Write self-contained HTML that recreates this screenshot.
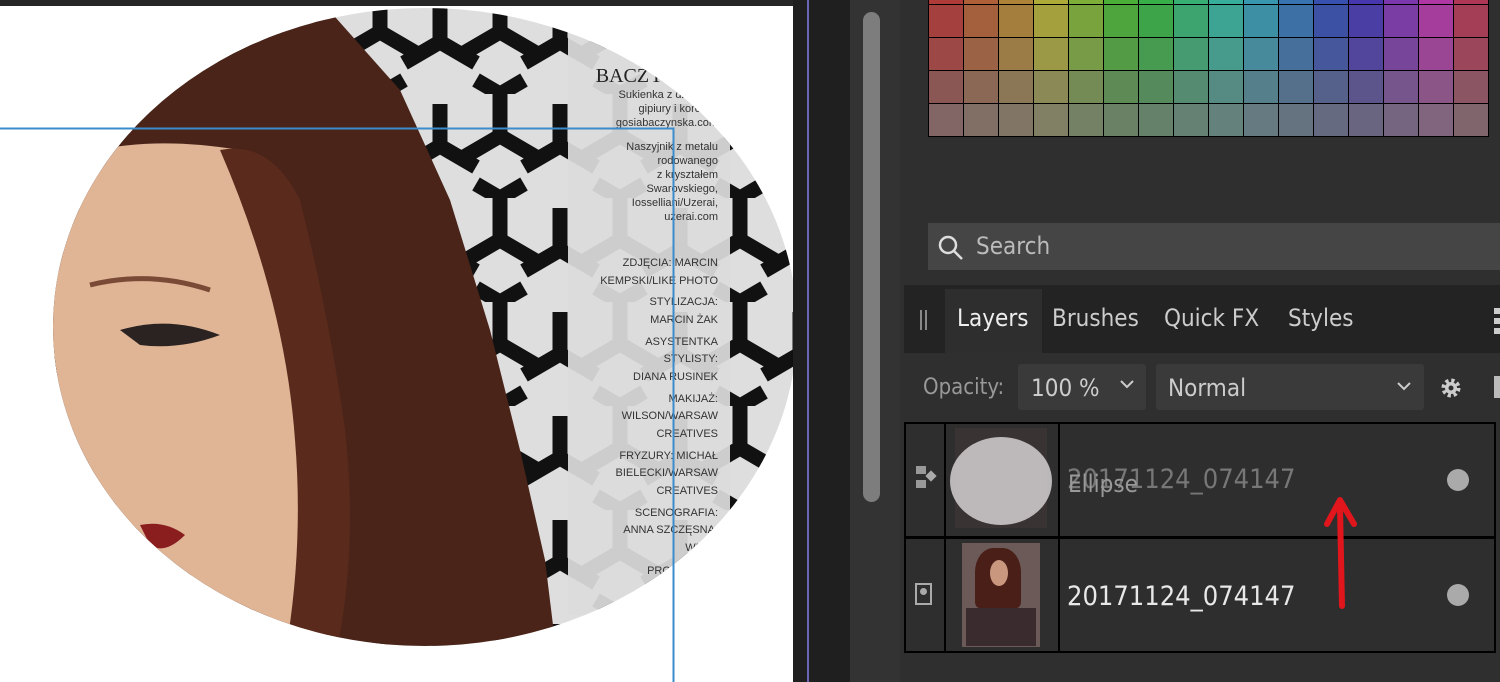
<!DOCTYPE html>
<html><head><meta charset="utf-8"><style>
body{margin:0;width:1500px;height:682px;overflow:hidden;background:#2f2f2f;font-family:"Liberation Sans",sans-serif;position:relative}
.a{position:absolute}
.t{color:#d8d8d8;font-size:24px;font-family:"DejaVu Sans Condensed","Liberation Sans",sans-serif}
</style></head><body>
<svg class="a" style="left:0;top:0" width="793" height="682">
<defs>
<clipPath id="c"><ellipse cx="425" cy="327" rx="372" ry="319"/></clipPath>
<pattern id="p" width="120" height="104" patternUnits="userSpaceOnUse" x="20" y="-10">
<rect width="120" height="104" fill="#dedede"/>
<g stroke="#111" stroke-width="15" fill="none">
<path d="M60 52 L60 10 M60 52 L24 73 M60 52 L96 73 M0 0 L0 42 M0 42 L-36 63 M0 42 L36 63 M120 0 L120 42 M120 42 L84 63 M120 42 L156 63 M0 104 L24 90 M120 104 L96 90 M60 -52 L60 0"/>
</g></pattern>
</defs>
<rect width="793" height="682" fill="#fff"/>
<rect width="793" height="6" fill="#262626"/>
<g clip-path="url(#c)">
<rect x="0" y="0" width="800" height="682" fill="url(#p)"/>
<rect x="568" y="35" width="162" height="580" fill="#dcdcdc" opacity="0.93"/>
<path d="M0 0 L320 0 L400 90 L450 200 L490 330 L520 450 L545 560 L560 682 L0 682Z" fill="#4a2419"/>
<path d="M40 170 Q120 130 240 150 Q290 210 305 300 Q318 400 325 480 Q335 570 320 682 L0 682 L0 170Z" fill="#dfb596"/>
<path d="M220 150 Q270 140 300 200 Q330 320 345 430 Q360 560 330 682 L280 682 Q305 560 295 440 Q285 300 220 150Z" fill="#5a2b1c"/>
<path d="M120 330 Q170 315 220 335 Q180 350 140 345Z" fill="#2b2222"/>
<path d="M90 285 Q150 270 210 290" stroke="#7a4a36" stroke-width="5" fill="none"/>
<path d="M140 525 Q165 520 185 535 Q165 555 150 545Z" fill="#8a1e1e"/>
<g font-family="Liberation Sans" font-size="11" fill="#333" text-anchor="end">
<text x="718" y="82" font-family="Liberation Serif" font-size="20" fill="#222">BACZYŃSKA</text>
<text x="718" y="98">Sukienka z dzianiny,</text><text x="718" y="112">gipiury i koronki,</text><text x="718" y="126">gosiabaczynska.com</text>
<text x="718" y="150">Naszyjnik z metalu</text><text x="718" y="164">rodowanego</text><text x="718" y="178">z kryształem</text><text x="718" y="192">Swarovskiego,</text><text x="718" y="206">Iosselliani/Uzerai,</text><text x="718" y="220">uzerai.com</text>
<text x="718" y="266">ZDJĘCIA: MARCIN</text><text x="718" y="284">KEMPSKI/LIKE PHOTO</text><text x="718" y="305">STYLIZACJA:</text><text x="718" y="323">MARCIN ŻAK</text><text x="718" y="345">ASYSTENTKA</text><text x="718" y="362">STYLISTY:</text><text x="718" y="380">DIANA RUSINEK</text><text x="718" y="402">MAKIJAŻ:</text><text x="718" y="419">WILSON/WARSAW</text><text x="718" y="437">CREATIVES</text><text x="718" y="459">FRYZURY: MICHAŁ</text><text x="718" y="476">BIELECKI/WARSAW</text><text x="718" y="494">CREATIVES</text><text x="718" y="516">SCENOGRAFIA:</text><text x="718" y="533">ANNA SZCZĘSNA/</text><text x="718" y="551">WITAL</text><text x="718" y="574">PRODUKCJA:</text><text x="718" y="591">MARTA</text>
</g>
</g>
<path d="M0 128.5 H673.5 V682" stroke="#3a8ccc" stroke-width="2" fill="none"/>
</svg>
<div class="a" style="left:793px;top:0;width:57px;height:682px;background:#1f1f1f"></div>
<div class="a" style="left:807px;top:0;width:2px;height:682px;background:#6c64b8"></div>
<div class="a" style="left:850px;top:0;width:50px;height:682px;background:#333"></div>
<div class="a" style="left:863px;top:12px;width:17px;height:490px;background:#7d7d7d;border-radius:9px"></div>
<div class="a" style="left:928px;top:0;width:561px;height:137px;background:#000"></div>
<div class="a" id="g" style="left:929px;top:0;display:grid;grid-template-columns:repeat(16,34px);grid-template-rows:4px repeat(4,32px);gap:1px"></div>
<div class="a" style="left:928px;top:223px;width:572px;height:47px;background:#454545"></div>
<svg class="a" style="left:936px;top:233px" width="32" height="30"><circle cx="12" cy="12" r="8" stroke="#ddd" stroke-width="2.5" fill="none"/><path d="M18 18 L26 26" stroke="#ddd" stroke-width="2.5"/></svg>
<div class="a t" style="left:976px;top:232px;color:#bbb">Search</div>
<div class="a" style="left:904px;top:285px;width:596px;height:68px;background:#232323"></div>
<div class="a" style="left:945px;top:289px;width:97px;height:64px;background:#2e2e2e"></div>
<div class="a" style="left:920px;top:310px;width:2px;height:20px;background:#888;box-shadow:5px 0 0 #888"></div>
<div class="a t" style="left:957px;top:304px;color:#eee">Layers</div>
<div class="a t" style="left:1052px;top:304px;color:#ccc">Brushes</div>
<div class="a t" style="left:1164px;top:304px;color:#ccc">Quick FX</div>
<div class="a t" style="left:1288px;top:304px;color:#ccc">Styles</div>
<div class="a" style="left:1494px;top:308px;width:6px;height:6px;background:#ccc;box-shadow:0 10px 0 #ccc,0 20px 0 #ccc"></div>
<div class="a" style="left:904px;top:355px;width:596px;height:67px;background:#2f2f2f"></div>
<div class="a t" style="left:923px;top:375px;color:#999;font-size:22px">Opacity:</div>
<div class="a" style="left:1018px;top:364px;width:128px;height:46px;background:#3a3a3a;border-radius:3px"></div>
<div class="a t" style="left:1031px;top:374px;color:#ccc">100 %</div>
<div class="a" style="left:1156px;top:364px;width:268px;height:46px;background:#3a3a3a;border-radius:3px"></div>
<div class="a t" style="left:1168px;top:374px;color:#ccc">Normal</div>
<svg class="a" style="left:1118px;top:378px" width="20" height="14"><path d="M3 3 L9 9 L15 3" stroke="#ccc" stroke-width="2" fill="none"/></svg>
<svg class="a" style="left:1395px;top:380px" width="20" height="14"><path d="M3 3 L9 9 L15 3" stroke="#ccc" stroke-width="2" fill="none"/></svg>
<svg class="a" style="left:1437px;top:374px" width="28" height="28"><circle cx="14" cy="14" r="7" stroke="#ccc" stroke-width="5" stroke-dasharray="3 2.5" fill="none"/><circle cx="14" cy="14" r="6" fill="#ccc"/><circle cx="14" cy="14" r="2.5" fill="#2f2f2f"/></svg>
<div class="a" style="left:1494px;top:376px;width:6px;height:22px;background:#bbb"></div>
<div class="a" style="left:904px;top:422px;width:592px;height:231px;background:#000"></div>
<div class="a" style="left:906px;top:424px;width:38px;height:112px;background:#2e2e2e"></div>
<div class="a" style="left:946px;top:424px;width:112px;height:112px;background:#2e2e2e"></div>
<div class="a" style="left:1060px;top:424px;width:434px;height:112px;background:#2e2e2e"></div>
<div class="a" style="left:906px;top:539px;width:38px;height:112px;background:#2e2e2e"></div>
<div class="a" style="left:946px;top:539px;width:112px;height:112px;background:#2e2e2e"></div>
<div class="a" style="left:1060px;top:539px;width:434px;height:112px;background:#2e2e2e"></div>
<div class="a" style="left:955px;top:428px;width:92px;height:100px;background:#3a3333"></div>
<div class="a" style="left:950px;top:437px;width:102px;height:88px;border-radius:50%;background:#c9c4c6;opacity:.92"></div>
<div class="a" style="left:962px;top:543px;width:78px;height:104px;background:#6b5a58"></div>
<div class="a" style="left:975px;top:548px;width:46px;height:60px;border-radius:40% 40% 10% 10%;background:#4a1f18"></div>
<div class="a" style="left:990px;top:560px;width:18px;height:26px;border-radius:50%;background:#c9977e"></div>
<div class="a" style="left:966px;top:608px;width:70px;height:38px;background:#3a2b2e"></div>
<div class="a" style="left:916px;top:466px;width:10px;height:8px;background:#999;box-shadow:0 14px 0 #999"></div>
<div class="a" style="left:927px;top:472px;width:8px;height:8px;background:#aaa;transform:rotate(45deg)"></div>
<div class="a" style="left:915px;top:583px;width:17px;height:22px;border:2px solid #aaa;box-sizing:border-box"></div>
<div class="a" style="left:920px;top:588px;width:7px;height:7px;border-radius:50%;background:#aaa"></div>
<div class="a t" style="left:1067px;top:464px;color:#777;font-size:27px">20171124_074147</div>
<div class="a t" style="left:1068px;top:470px;color:#999;font-size:24px">Ellipse</div>
<div class="a t" style="left:1067px;top:581px;color:#e8e8e8;font-size:27px">20171124_074147</div>
<div class="a" style="left:1447px;top:469px;width:22px;height:22px;border-radius:50%;background:#aaa"></div>
<div class="a" style="left:1447px;top:584px;width:22px;height:22px;border-radius:50%;background:#aaa"></div>
<svg class="a" style="left:1310px;top:488px" width="60" height="125"><path d="M32 118 L30 20" stroke="#e0161c" stroke-width="6" stroke-linecap="round" fill="none"/><path d="M17 36 L30 12 L44 36" stroke="#e0161c" stroke-width="6" stroke-linecap="round" stroke-linejoin="round" fill="none"/></svg>
<script>
var h=[2,20,38,58,85,110,128,150,170,192,210,228,248,275,305,345],s=[52,46,38,24,12],l=[45,44,44,44,45],g=document.getElementById('g');
for(var r=0;r<5;r++)for(var c=0;c<16;c++){var d=document.createElement('div');d.style.background='hsl('+h[c]+','+s[r]+'%,'+l[r]+'%)';g.appendChild(d);}
</script>
</body></html>
